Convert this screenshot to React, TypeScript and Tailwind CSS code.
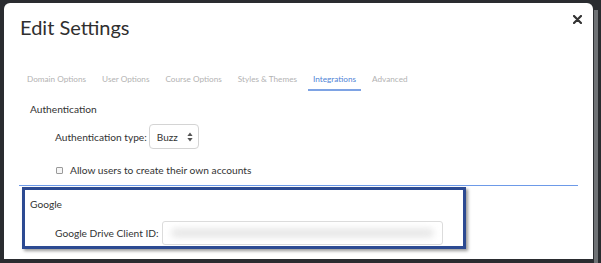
import React from "react";

const tabs = [
  "Domain Options",
  "User Options",
  "Course Options",
  "Styles & Themes",
  "Integrations",
  "Advanced",
];

const SortArrows = () => (
  <svg width="6" height="10" viewBox="0 0 6 10" className="text-[#555]">
    <path d="M3 0.5 L5.6 4 L0.4 4 Z" fill="currentColor" />
    <path d="M3 9.5 L5.6 6 L0.4 6 Z" fill="currentColor" />
  </svg>
);

const App = () => {
  return (
    <div className="w-[601px] h-[263px] bg-[#2a2c30] overflow-hidden flex font-['Lato',sans-serif]">
      <div className="pl-[4px] pt-[3px]">
        <div className="w-[589px] h-[256px] bg-white rounded-t-[6px] flex flex-col">
          {/* header */}
          <div className="flex items-start justify-between pl-[16px] pr-[11px] pt-[11px]">
            <h1 className="text-[20px] leading-[26px] text-[#2f2f2f] font-normal">
              Edit Settings
            </h1>
            <svg width="9" height="9" viewBox="0 0 9 9" className="mt-[1px]">
              <path
                d="M1 1 L8 8 M8 1 L1 8"
                stroke="#333"
                strokeWidth="2.2"
                strokeLinecap="round"
              />
            </svg>
          </div>

          {/* tabs */}
          <div className="flex gap-[6px] pl-[18px] mt-[33px]">
            {tabs.map((t) => (
              <div
                key={t}
                className={
                  t === "Integrations"
                    ? "px-[5px] pb-[4px] text-[8.2px] leading-[12px] text-[#4f84d6] border-b-[2px] border-[#7ea3e4]"
                    : "px-[5px] pb-[4px] text-[8.2px] leading-[12px] text-[#b3b3b3] border-b-[2px] border-transparent"
                }
              >
                {t}
              </div>
            ))}
          </div>

          {/* content */}
          <div className="mx-[15px] mt-[6px]">
            <div className="pl-[11px] pt-[5px] text-[10.2px] leading-[14px] text-[#333]">
              Authentication
            </div>
            <div className="flex items-center h-[25px] pl-[36px] mt-[8px] text-[10.2px] leading-[14px] text-[#333]">
              <span>Authentication type:</span>
              <div className="ml-[2px] w-[50px] h-[25px] border border-[#d4d4d4] rounded-[4px] flex items-center justify-between pl-[7px] pr-[5px]">
                <span className="text-[10px] text-[#333]">Buzz</span>
                <SortArrows />
              </div>
            </div>
            <div className="flex items-center h-[15px] pl-[37px] mt-[14px] text-[10.2px] leading-[15px] text-[#333]">
              <div className="w-[7px] h-[7px] border border-[#9a9a9a] rounded-[1px] bg-[#f6f6f6]" />
              <span className="ml-[7px]">Allow users to create their own accounts</span>
            </div>
            <div className="mt-[7px] h-[1px] bg-[#6d9ae8]" />

            {/* highlighted Google section */}
            <div className="ml-[3px] mt-[1px] w-[444px] h-[62px] border-[3px] border-[#2c4a92] shadow-[2px_2px_3px_rgba(0,0,0,0.4)] pl-[5px]">
              <div className="pt-[7px] text-[10.2px] leading-[14px] text-[#333]">Google</div>
              <div className="flex items-center h-[24px] pl-[25px] mt-[10px] text-[10.2px] leading-[14px] text-[#333]">
                <span>Google Drive Client ID:</span>
                <div className="ml-[3px] w-[281px] h-[24px] border border-[#dcdcdc] rounded-[3px] flex items-center px-[8px] overflow-hidden">
                  <div className="h-[10px] w-full rounded-full bg-[#e9e9e9] blur-[3px]" />
                </div>
              </div>
            </div>
          </div>
        </div>
      </div>
      <div className="ml-[1px] pt-[10px]">
        <div className="w-[4px] h-[253px] bg-[#6f7275]" />
      </div>
    </div>
  );
};

export default App;
